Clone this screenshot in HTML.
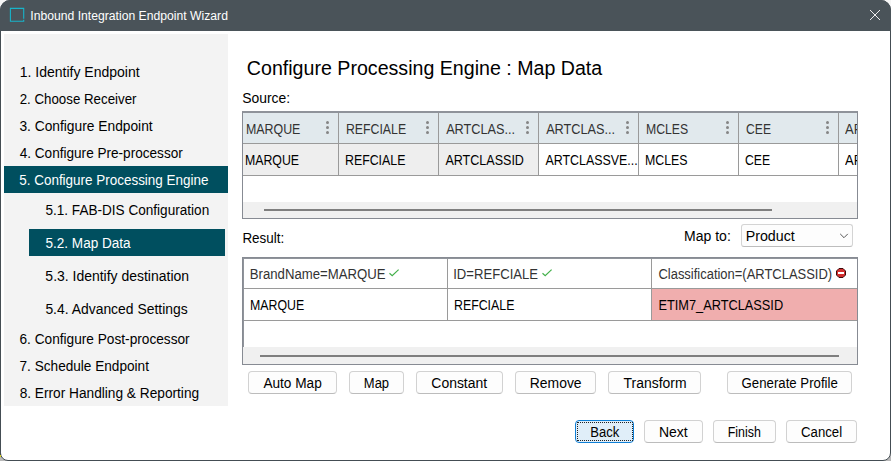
<!DOCTYPE html>
<html><head><meta charset="utf-8"><title>Inbound Integration Endpoint Wizard</title>
<style>
html,body{margin:0;padding:0;}
body{width:891px;height:461px;overflow:hidden;background:#b9b9b9;font-family:"Liberation Sans",sans-serif;position:relative;}
#win{position:absolute;left:0;top:0;width:889px;height:459px;border:1px solid #444d53;border-radius:10px 10px 8px 8px;background:#fff;overflow:hidden;}
#page{position:absolute;left:0;top:0;width:891px;height:461px;}
#page div{position:absolute;box-sizing:border-box;}
.t{position:absolute;white-space:nowrap;transform-origin:0 0;display:block;}
#title{left:0;top:0;width:891px;height:31px;background:#4a5359;}
#side{left:4px;top:34px;width:224px;height:372px;background:#f3f3f3;}
.hl{background:#004f5f;}
.btn{border:1px solid #d2d2d2;border-bottom-color:#bcbcbc;border-radius:4px;background:#fdfdfd;height:23px;}
.vl{width:1px;background:#9a9a9a;}
.hline{height:1px;background:#9a9a9a;}
.dots{width:3px;height:13px;}
.dots i{position:absolute;left:0;width:3px;height:3px;border-radius:50%;background:#858585;}
</style></head><body>
<div style="position:absolute;left:0;top:0;width:891px;height:20px;background:#f6f6f6"></div>
<div id="win"></div>
<div id="page">
<div id="title" style="border-radius:10px 10px 0 0"></div>
<!-- title icon -->
<svg style="position:absolute;left:9px;top:7px" width="17" height="17" viewBox="0 0 17 17"><path d="M14.7 11.8 V1.4 H1.4 V14.3 H14.7 V12.8" fill="none" stroke="#18b4c9" stroke-width="1.1"/></svg>
<!-- close X -->
<svg style="position:absolute;left:869px;top:9px" width="12" height="12" viewBox="0 0 12 12"><path d="M1 1 L11 11 M11 1 L1 11" stroke="#fff" stroke-width="0.9" fill="none"/></svg>

<div id="side"></div>
<div style="left:0;top:440px;width:1px;height:17px;background:#444d53"></div>
<div style="left:0;top:455px;width:1px;height:2px;background:#d6cf1e"></div>
<div class="hl" style="left:4px;top:166px;width:224px;height:27px"></div>
<div class="hl" style="left:29px;top:229px;width:196px;height:27px"></div>

<!-- SOURCE TABLE -->
<div style="left:242px;top:111px;width:616px;height:108px;border:1px solid #878b93;border-top:2px solid #8f939a;background:#fff"></div>
<div style="left:243px;top:113px;width:614px;height:30px;background:#e1e9ed"></div>
<div style="left:243px;top:144px;width:295px;height:31px;background:#eeeeee"></div>
<div style="left:243px;top:202px;width:614px;height:16px;background:#f0f0f0"></div>
<div class="hline" style="left:243px;top:143px;width:614px"></div>
<div class="hline" style="left:243px;top:175px;width:614px"></div>
<div class="vl" style="left:338px;top:113px;height:62px"></div>
<div class="vl" style="left:438px;top:113px;height:62px"></div>
<div class="vl" style="left:538px;top:113px;height:62px"></div>
<div class="vl" style="left:638px;top:113px;height:62px"></div>
<div class="vl" style="left:738px;top:113px;height:62px"></div>
<div class="vl" style="left:838px;top:113px;height:62px"></div>
<div style="left:264px;top:209px;width:508px;height:2px;background:#7f7f7f"></div>
<!-- dots -->
<div class="dots" style="left:325.5px;top:121px"><i style="top:0"></i><i style="top:5px"></i><i style="top:10px"></i></div>
<div class="dots" style="left:425.5px;top:121px"><i style="top:0"></i><i style="top:5px"></i><i style="top:10px"></i></div>
<div class="dots" style="left:525.5px;top:121px"><i style="top:0"></i><i style="top:5px"></i><i style="top:10px"></i></div>
<div class="dots" style="left:625.5px;top:121px"><i style="top:0"></i><i style="top:5px"></i><i style="top:10px"></i></div>
<div class="dots" style="left:725.5px;top:121px"><i style="top:0"></i><i style="top:5px"></i><i style="top:10px"></i></div>
<div class="dots" style="left:825.5px;top:121px"><i style="top:0"></i><i style="top:5px"></i><i style="top:10px"></i></div>
<!-- clipped AR -->
<div style="left:839px;top:113px;width:18px;height:62px;overflow:hidden">
<span class="t" style="left:6.2px;top:8.65px;font-size:14px;line-height:14px;color:#333;transform:scaleX(.93)">ARTCLAS...</span>
<span class="t" style="left:5.7px;top:39.65px;font-size:14px;line-height:14px;color:#000;transform:scaleX(.93)">ARTCLASS</span>
</div>

<!-- RESULT TABLE -->
<div style="left:242px;top:257px;width:616px;height:108px;border:1px solid #878b93;background:#fff"></div>
<div style="left:243px;top:258px;width:614px;height:90px;border:1px solid #90949b;border-bottom:none;border-right:none"></div>
<div style="left:243px;top:347px;width:614px;height:17px;background:#f0f0f0"></div>
<div style="left:652px;top:289px;width:205px;height:31px;background:#f0aeae"></div>
<div class="hline" style="left:244px;top:288px;width:613px"></div>
<div class="hline" style="left:244px;top:320px;width:613px"></div>
<div class="vl" style="left:447px;top:259px;height:61px"></div>
<div class="vl" style="left:651px;top:259px;height:61px"></div>
<div style="left:260px;top:355px;width:579px;height:2px;background:#7f7f7f"></div>
<!-- checks -->
<svg style="position:absolute;left:388px;top:268px" width="12" height="10" viewBox="0 0 12 10"><path d="M1.5 5.3 L4.2 7.7 L10.6 1.6" fill="none" stroke="#43b04a" stroke-width="1.2"/></svg>
<svg style="position:absolute;left:541px;top:268px" width="12" height="10" viewBox="0 0 12 10"><path d="M1.5 5.3 L4.2 7.7 L10.6 1.6" fill="none" stroke="#43b04a" stroke-width="1.2"/></svg>
<!-- red icon -->
<svg style="position:absolute;left:836px;top:268px" width="10" height="10" viewBox="0 0 10 10"><polygon points="3,0.5 7,0.5 9.5,3 9.5,7 7,9.5 3,9.5 0.5,7 0.5,3" fill="#d32f2f" stroke="#3a0a0a" stroke-width="1"/><rect x="2" y="4" width="6" height="2" fill="#fff"/></svg>

<!-- select -->
<div style="left:741px;top:224px;width:112px;height:23px;border:1px solid #d4d4d4;border-bottom-color:#bdbdbd;border-radius:3px;background:#fdfdfd"></div>
<svg style="position:absolute;left:839px;top:232px" width="10" height="7" viewBox="0 0 10 7"><path d="M1.2 1.9 L5 5.7 L8.8 1.9" fill="none" stroke="#444" stroke-width="0.9"/></svg>

<!-- buttons row1 -->
<div class="btn" style="left:248px;top:371px;width:89px"></div>
<div class="btn" style="left:349px;top:371px;width:55px"></div>
<div class="btn" style="left:416px;top:371px;width:87px"></div>
<div class="btn" style="left:515px;top:371px;width:81px"></div>
<div class="btn" style="left:608px;top:371px;width:93px"></div>
<div class="btn" style="left:727px;top:371px;width:125px"></div>
<!-- buttons row2 -->
<div class="btn" style="left:575px;top:420px;width:59px;border-color:#0f7fd6;background:#e0eef9"></div>
<div style="left:577px;top:422px;width:56px;height:19px;border:1px dotted #222"></div>
<div class="btn" style="left:644px;top:420px;width:59px"></div>
<div class="btn" style="left:713px;top:420px;width:63px"></div>
<div class="btn" style="left:786px;top:420px;width:71px"></div>

<span class="t" style="left:0;top:0;font-size:12px;line-height:12px;color:#fff;transform:translate(30.30px,9.84px) scaleX(1.0144)">Inbound Integration Endpoint Wizard</span>
<span class="t" style="left:0;top:0;font-size:14px;line-height:14px;color:#000;transform:translate(19.69px,65.15px) scaleX(1.0007)">1. Identify Endpoint</span>
<span class="t" style="left:0;top:0;font-size:14px;line-height:14px;color:#000;transform:translate(19.65px,92.15px) scaleX(0.9502)">2. Choose Receiver</span>
<span class="t" style="left:0;top:0;font-size:14px;line-height:14px;color:#000;transform:translate(19.38px,119.15px) scaleX(0.9842)">3. Configure Endpoint</span>
<span class="t" style="left:0;top:0;font-size:14px;line-height:14px;color:#000;transform:translate(19.68px,146.15px) scaleX(0.9703)">4. Configure Pre-processor</span>
<span class="t" style="left:0;top:0;font-size:14px;line-height:14px;color:#fff;transform:translate(19.24px,173.15px) scaleX(0.9610)">5. Configure Processing Engine</span>
<span class="t" style="left:0;top:0;font-size:14px;line-height:14px;color:#000;transform:translate(45.45px,203.15px) scaleX(0.9696)">5.1. FAB-DIS Configuration</span>
<span class="t" style="left:0;top:0;font-size:14px;line-height:14px;color:#fff;transform:translate(45.46px,236.15px) scaleX(0.9687)">5.2. Map Data</span>
<span class="t" style="left:0;top:0;font-size:14px;line-height:14px;color:#000;transform:translate(45.37px,269.15px) scaleX(0.9978)">5.3. Identify destination</span>
<span class="t" style="left:0;top:0;font-size:14px;line-height:14px;color:#000;transform:translate(45.38px,302.15px) scaleX(0.9936)">5.4. Advanced Settings</span>
<span class="t" style="left:0;top:0;font-size:14px;line-height:14px;color:#000;transform:translate(19.49px,332.15px) scaleX(0.9763)">6. Configure Post-processor</span>
<span class="t" style="left:0;top:0;font-size:14px;line-height:14px;color:#000;transform:translate(19.55px,359.15px) scaleX(0.9721)">7. Schedule Endpoint</span>
<span class="t" style="left:0;top:0;font-size:14px;line-height:14px;color:#000;transform:translate(19.64px,386.15px) scaleX(0.9772)">8. Error Handling &amp; Reporting</span>
<span class="t" style="left:0;top:0;font-size:20px;line-height:20px;color:#000;transform:translate(246.85px,57.77px) scaleX(0.9804)">Configure Processing Engine : Map Data</span>
<span class="t" style="left:0;top:0;font-size:14px;line-height:14px;color:#000;transform:translate(242.27px,91.15px) scaleX(0.9924)">Source:</span>
<span class="t" style="left:0;top:0;font-size:14px;line-height:14px;color:#000;transform:translate(242.39px,231.15px) scaleX(0.9587)">Result:</span>
<span class="t" style="left:0;top:0;font-size:14px;line-height:14px;color:#000;transform:translate(684.09px,229.15px) scaleX(0.9999)">Map to:</span>
<span class="t" style="left:0;top:0;font-size:14px;line-height:14px;color:#000;transform:translate(745.66px,229.15px) scaleX(1.0165)">Product</span>
<span class="t" style="left:0;top:0;font-size:14px;line-height:14px;color:#333;transform:translate(245.91px,121.65px) scaleX(0.8867)">MARQUE</span>
<span class="t" style="left:0;top:0;font-size:14px;line-height:14px;color:#333;transform:translate(345.95px,121.65px) scaleX(0.8786)">REFCIALE</span>
<span class="t" style="left:0;top:0;font-size:14px;line-height:14px;color:#333;transform:translate(446.14px,121.65px) scaleX(0.9063)">ARTCLAS...</span>
<span class="t" style="left:0;top:0;font-size:14px;line-height:14px;color:#333;transform:translate(546.14px,121.65px) scaleX(0.9063)">ARTCLAS...</span>
<span class="t" style="left:0;top:0;font-size:14px;line-height:14px;color:#333;transform:translate(646.01px,121.65px) scaleX(0.8739)">MCLES</span>
<span class="t" style="left:0;top:0;font-size:14px;line-height:14px;color:#333;transform:translate(746.11px,121.65px) scaleX(0.8655)">CEE</span>
<span class="t" style="left:0;top:0;font-size:14px;line-height:14px;color:#000;transform:translate(244.94px,152.65px) scaleX(0.8805)">MARQUE</span>
<span class="t" style="left:0;top:0;font-size:14px;line-height:14px;color:#000;transform:translate(344.96px,152.65px) scaleX(0.8828)">REFCIALE</span>
<span class="t" style="left:0;top:0;font-size:14px;line-height:14px;color:#000;transform:translate(445.42px,152.65px) scaleX(0.8955)">ARTCLASSID</span>
<span class="t" style="left:0;top:0;font-size:14px;line-height:14px;color:#000;transform:translate(545.42px,152.65px) scaleX(0.8867)">ARTCLASSVE...</span>
<span class="t" style="left:0;top:0;font-size:14px;line-height:14px;color:#000;transform:translate(644.95px,152.65px) scaleX(0.8829)">MCLES</span>
<span class="t" style="left:0;top:0;font-size:14px;line-height:14px;color:#000;transform:translate(744.93px,152.65px) scaleX(0.8728)">CEE</span>
<span class="t" style="left:0;top:0;font-size:14px;line-height:14px;color:#333;transform:translate(249.78px,267.15px) scaleX(0.9403)">BrandName=MARQUE</span>
<span class="t" style="left:0;top:0;font-size:14px;line-height:14px;color:#333;transform:translate(453.22px,267.15px) scaleX(0.9360)">ID=REFCIALE</span>
<span class="t" style="left:0;top:0;font-size:14px;line-height:14px;color:#333;transform:translate(658.46px,267.15px) scaleX(0.9253)">Classification=(ARTCLASSID)</span>
<span class="t" style="left:0;top:0;font-size:14px;line-height:14px;color:#000;transform:translate(249.96px,297.65px) scaleX(0.8814)">MARQUE</span>
<span class="t" style="left:0;top:0;font-size:14px;line-height:14px;color:#000;transform:translate(453.96px,297.65px) scaleX(0.8828)">REFCIALE</span>
<span class="t" style="left:0;top:0;font-size:14px;line-height:14px;color:#000;transform:translate(658.41px,297.65px) scaleX(0.9124)">ETIM7_ARTCLASSID</span>
<span class="t" style="left:0;top:0;font-size:14px;line-height:14px;color:#000;transform:translate(263.38px,375.65px) scaleX(0.9739)">Auto Map</span>
<span class="t" style="left:0;top:0;font-size:14px;line-height:14px;color:#000;transform:translate(363.84px,375.65px) scaleX(0.9264)">Map</span>
<span class="t" style="left:0;top:0;font-size:14px;line-height:14px;color:#000;transform:translate(431.31px,375.65px) scaleX(0.9960)">Constant</span>
<span class="t" style="left:0;top:0;font-size:14px;line-height:14px;color:#000;transform:translate(529.81px,375.65px) scaleX(0.9930)">Remove</span>
<span class="t" style="left:0;top:0;font-size:14px;line-height:14px;color:#000;transform:translate(623.60px,375.65px) scaleX(0.9937)">Transform</span>
<span class="t" style="left:0;top:0;font-size:14px;line-height:14px;color:#000;transform:translate(741.59px,375.65px) scaleX(0.9436)">Generate Profile</span>
<span class="t" style="left:0;top:0;font-size:14px;line-height:14px;color:#000;transform:translate(590.19px,424.95px) scaleX(0.9331)">Back</span>
<span class="t" style="left:0;top:0;font-size:14px;line-height:14px;color:#000;transform:translate(658.88px,424.95px) scaleX(0.9980)">Next</span>
<span class="t" style="left:0;top:0;font-size:14px;line-height:14px;color:#000;transform:translate(727.70px,424.95px) scaleX(0.8860)">Finish</span>
<span class="t" style="left:0;top:0;font-size:14px;line-height:14px;color:#000;transform:translate(801.01px,424.95px) scaleX(0.9426)">Cancel</span>
</div>
</body></html>
